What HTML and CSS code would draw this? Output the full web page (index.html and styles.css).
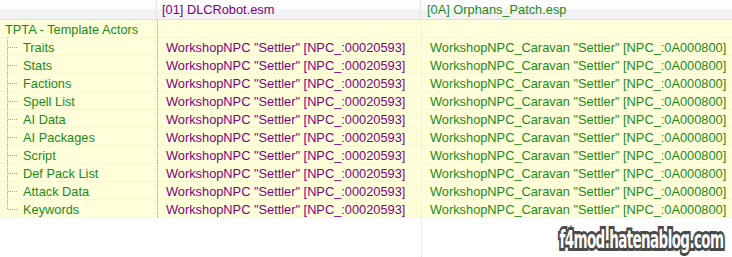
FILE: index.html
```html
<!DOCTYPE html>
<html>
<head>
<meta charset="utf-8">
<link rel="stylesheet" href="styles.css">
</head>
<body>
<div class="view">
  <div class="grid">
    <div class="hdr hdr-name"></div>
    <div class="hdr hdr-a">[01] DLCRobot.esm</div>
    <div class="hdr hdr-b">[0A] Orphans_Patch.esp</div>

    <div class="cell name root">TPTA - Template Actors</div>
    <div class="cell a"></div>
    <div class="cell b"></div>

    <div class="cell name child"><span class="branch"></span>Traits</div>
    <div class="cell a">WorkshopNPC "Settler" [NPC_:00020593]</div>
    <div class="cell b">WorkshopNPC_Caravan "Settler" [NPC_:0A000800]</div>

    <div class="cell name child"><span class="branch"></span>Stats</div>
    <div class="cell a">WorkshopNPC "Settler" [NPC_:00020593]</div>
    <div class="cell b">WorkshopNPC_Caravan "Settler" [NPC_:0A000800]</div>

    <div class="cell name child"><span class="branch"></span>Factions</div>
    <div class="cell a">WorkshopNPC "Settler" [NPC_:00020593]</div>
    <div class="cell b">WorkshopNPC_Caravan "Settler" [NPC_:0A000800]</div>

    <div class="cell name child"><span class="branch"></span>Spell List</div>
    <div class="cell a">WorkshopNPC "Settler" [NPC_:00020593]</div>
    <div class="cell b">WorkshopNPC_Caravan "Settler" [NPC_:0A000800]</div>

    <div class="cell name child"><span class="branch"></span>AI Data</div>
    <div class="cell a">WorkshopNPC "Settler" [NPC_:00020593]</div>
    <div class="cell b">WorkshopNPC_Caravan "Settler" [NPC_:0A000800]</div>

    <div class="cell name child"><span class="branch"></span>AI Packages</div>
    <div class="cell a">WorkshopNPC "Settler" [NPC_:00020593]</div>
    <div class="cell b">WorkshopNPC_Caravan "Settler" [NPC_:0A000800]</div>

    <div class="cell name child"><span class="branch"></span>Script</div>
    <div class="cell a">WorkshopNPC "Settler" [NPC_:00020593]</div>
    <div class="cell b">WorkshopNPC_Caravan "Settler" [NPC_:0A000800]</div>

    <div class="cell name child"><span class="branch"></span>Def Pack List</div>
    <div class="cell a">WorkshopNPC "Settler" [NPC_:00020593]</div>
    <div class="cell b">WorkshopNPC_Caravan "Settler" [NPC_:0A000800]</div>

    <div class="cell name child"><span class="branch"></span>Attack Data</div>
    <div class="cell a">WorkshopNPC "Settler" [NPC_:00020593]</div>
    <div class="cell b">WorkshopNPC_Caravan "Settler" [NPC_:0A000800]</div>

    <div class="cell name child last"><span class="branch"></span>Keywords</div>
    <div class="cell a">WorkshopNPC "Settler" [NPC_:00020593]</div>
    <div class="cell b">WorkshopNPC_Caravan "Settler" [NPC_:0A000800]</div>
  </div>
  <div class="watermark">f4mod.hatenablog.com</div>
</div>
</body>
</html>
```

FILE: styles.css
```css
html, body {
  margin: 0;
  padding: 0;
  background: #ffffff;
}
.view {
  position: relative;
  width: 732px;
  height: 257px;
  overflow: hidden;
  font-family: "Liberation Sans", Arial, sans-serif;
  font-size: 12.8px;
  background-image: repeating-linear-gradient(to bottom, #dcdcdc 0 1px, transparent 1px 2px);
  background-size: 1px 100%;
  background-position: 421px 0;
  background-repeat: no-repeat;
}
.grid {
  display: grid;
  grid-template-columns: 157px 264px 1fr;
  grid-auto-rows: 18px;
  grid-template-rows: 20px;
}
.hdr {
  background: linear-gradient(to bottom, #ffffff 0, #fcfcfc 45%, #f1f2f4 45%, #f1f2f4 100%);
  border-bottom: 1px solid #dfe0e2;
  box-sizing: border-box;
  height: 20px;
  line-height: 19px;
  padding-left: 6px;
  white-space: nowrap;
}
.hdr-name, .hdr-a {
  border-right: 1px solid #e3e4e6;
}
.hdr-a { color: #800080; padding-left: 5px; }
.hdr-b { color: #1a8a1a; padding-left: 6px; }
.cell {
  background-color: #ffffd9;
  box-sizing: border-box;
  height: 18px;
  line-height: 19px;
  white-space: nowrap;
  background-image: repeating-linear-gradient(to right, #ececec 0 1px, transparent 1px 2px);
  background-size: 100% 1px;
  background-position: 0 100%;
  background-repeat: no-repeat;
}
.name {
  color: #1a8a1a;
  position: relative;
}
.root { padding-left: 5px; }
.child { padding-left: 23px; }
.a {
  color: #800080;
  padding-left: 9px;
  background-image:
    repeating-linear-gradient(to bottom, #9a9a9a 0 1px, transparent 1px 2px),
    repeating-linear-gradient(to right, #ececec 0 1px, transparent 1px 2px);
  background-size: 1px 100%, 100% 1px;
  background-position: 0 0, 0 100%;
}
.b {
  color: #1a8a1a;
  padding-left: 9px;
  background-image:
    repeating-linear-gradient(to bottom, #e6e6e6 0 1px, transparent 1px 2px),
    repeating-linear-gradient(to right, #ececec 0 1px, transparent 1px 2px);
  background-size: 1px 100%, 100% 1px;
  background-position: 0 0, 0 100%;
}
.branch {
  position: absolute;
  left: 7px;
  top: 0;
  width: 11px;
  height: 18px;
  background-image:
    repeating-linear-gradient(to bottom, #a0a0a0 0 1px, transparent 1px 2px),
    repeating-linear-gradient(to right, #a0a0a0 0 1px, transparent 1px 2px);
  background-size: 1px 100%, 100% 1px;
  background-position: 0 0, 1px 9px;
  background-repeat: no-repeat;
}
.last .branch {
  background-size: 1px 10px, 100% 1px;
}
.watermark {
  position: absolute;
  right: 9px;
  bottom: 5px;
  font-family: "DejaVu Sans Condensed", "DejaVu Sans", sans-serif;
  font-weight: bold;
  font-size: 25px;
  line-height: 25px;
  letter-spacing: -1px;
  color: #ffffff;
  -webkit-text-stroke: 6px #4a4a4a;
  paint-order: stroke fill;
  transform: scaleX(0.6);
  transform-origin: right bottom;
}
```
